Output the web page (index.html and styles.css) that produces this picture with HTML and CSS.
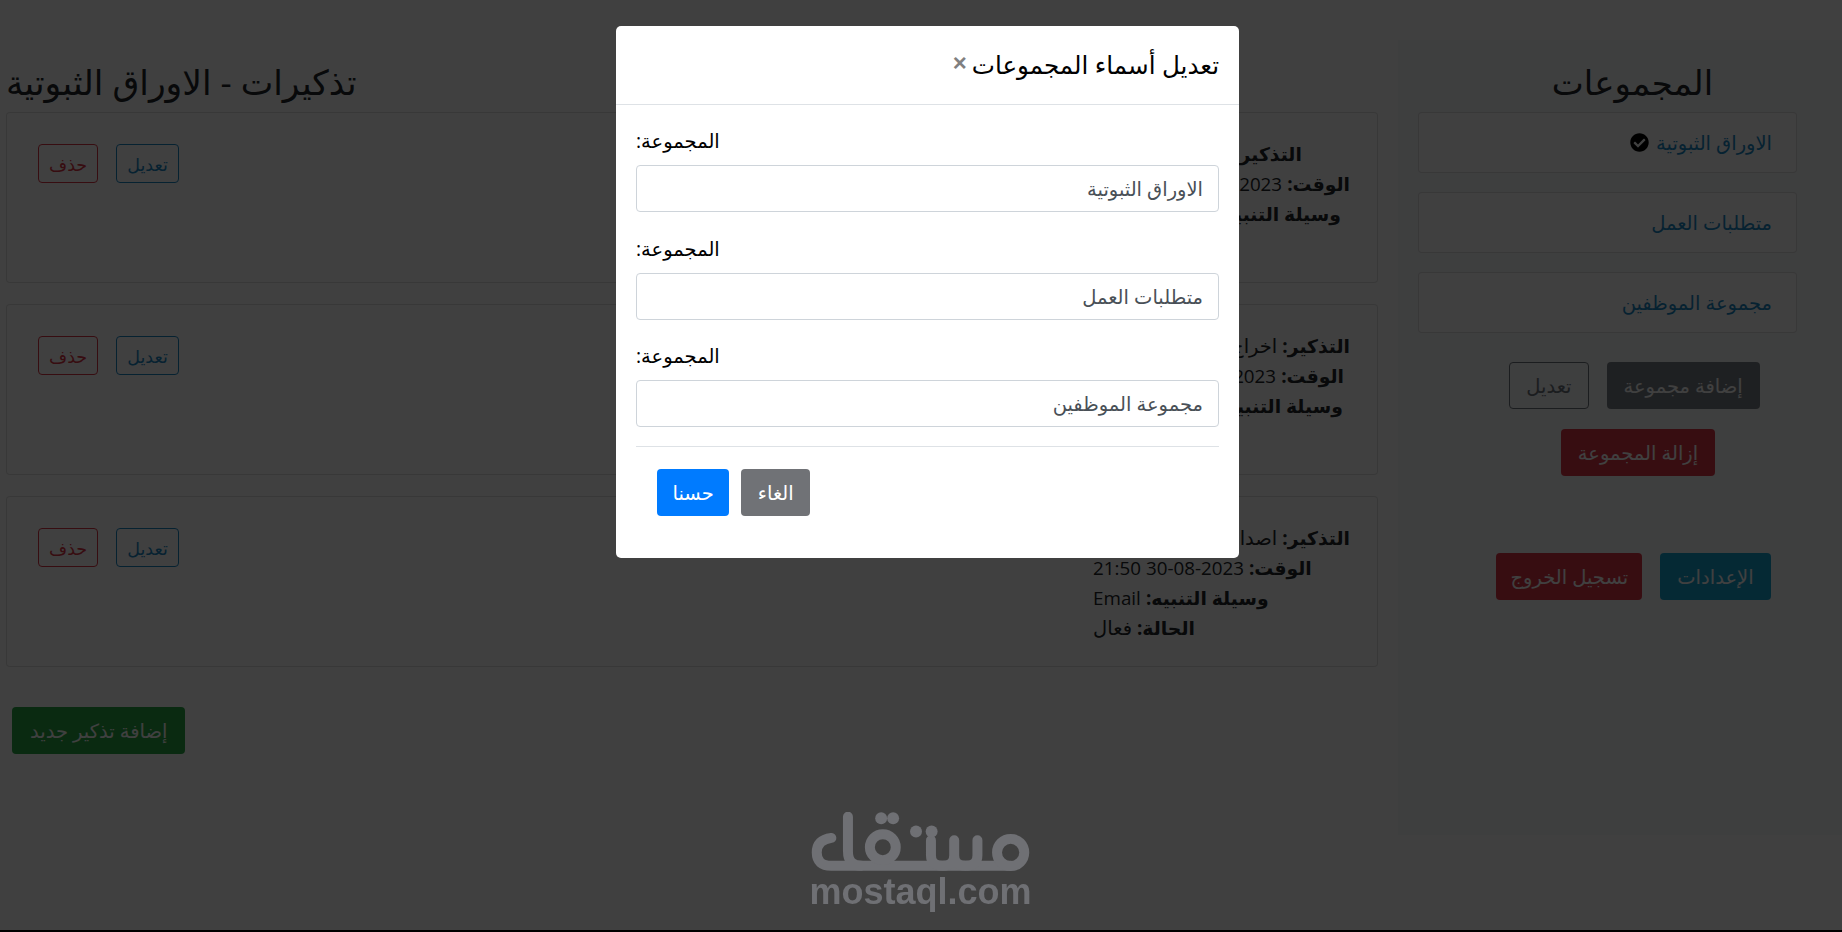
FILE: index.html
```html
<!DOCTYPE html>
<html lang="ar">
<head>
<meta charset="utf-8">
<title>تذكيرات</title>
<link rel="stylesheet" href="styles.css">
</head>
<body>
<div class="page">
  <main class="main">
    <h2 class="heading main-title">تذكيرات - الاوراق الثبوتية</h2>
    <section class="card">
      <div class="card-actions"><button class="btn btn-sm outline-danger">حذف</button><button class="btn btn-sm outline-primary">تعديل</button></div>
      <div class="details">
        <p><b>التذكير:</b> تجديد الجواز</p>
        <p><b>الوقت:</b> <span class="lat">2023-08-30 21:50</span></p>
        <p><b>وسيلة التنبيه:</b> <span class="lat">Telegram</span></p>
        <p><b>الحالة:</b> فعال</p>
      </div>
    </section>
    <section class="card">
      <div class="card-actions"><button class="btn btn-sm outline-danger">حذف</button><button class="btn btn-sm outline-primary">تعديل</button></div>
      <div class="details">
        <p><b>التذكير:</b> اخراج رخصة العمل</p>
        <p><b>الوقت:</b> <span class="lat">2023-08-30 21:50</span></p>
        <p><b>وسيلة التنبيه:</b> <span class="lat">WhatsApp</span></p>
        <p><b>الحالة:</b> فعال</p>
      </div>
    </section>
    <section class="card">
      <div class="card-actions"><button class="btn btn-sm outline-danger">حذف</button><button class="btn btn-sm outline-primary">تعديل</button></div>
      <div class="details">
        <p><b>التذكير:</b> اصدار بطاقة للموظفين</p>
        <p><b>الوقت:</b> <span class="lat">2023-08-30 21:50</span></p>
        <p><b>وسيلة التنبيه:</b> <span class="lat">Email</span></p>
        <p><b>الحالة:</b> فعال</p>
      </div>
    </section>
    <div class="add-row"><button class="btn success">إضافة تذكير جديد</button></div>
  </main>
  <aside class="sidebar">
    <h2 class="heading sidebar-title">المجموعات</h2>
    <ul class="groups">
      <li class="group"><a class="group-link">الاوراق الثبوتية</a>
        <svg class="check" viewBox="0 0 512 512"><path d="M504 256c0 137-111 248-248 248S8 393 8 256 119 8 256 8s248 111 248 248zM227 387l184-184c6-6 6-16 0-22l-23-23c-6-6-16-6-22 0L216 308l-70-70c-6-6-16-6-22 0l-23 23c-6 6-6 16 0 22l104 104c6 6 16 6 22 0z"/></svg>
      </li>
      <li class="group"><a class="group-link">متطلبات العمل</a></li>
      <li class="group"><a class="group-link">مجموعة الموظفين</a></li>
    </ul>
    <div class="side-row first"><button class="btn outline-dark">تعديل</button><button class="btn dark">إضافة مجموعة</button></div>
    <div class="side-row middle"><button class="btn danger">إزالة المجموعة</button></div>
    <div class="side-row bottom"><button class="btn danger logout">تسجيل الخروج</button><button class="btn info">الإعدادات</button></div>
  </aside>
</div>

<div class="backdrop"></div>

<div class="watermark">
  <svg class="mark" viewBox="0 0 840 250" fill="none" stroke="currentColor" stroke-width="30" stroke-linecap="round" stroke-linejoin="round">
    <path d="M200 14V118Q200 162 240 162"/>
    <path d="M150 78Q106 84 106 122Q106 162 150 162H690"/>
    <circle cx="305" cy="106" r="39"/>
    <circle cx="690" cy="122" r="41"/>
    <path d="M450 85V130Q450 162 485 162Q520 162 520 130V85M520 130Q520 162 555 162Q590 162 590 130V85"/>
    <g fill="currentColor" stroke="none">
      <circle cx="300" cy="19" r="18"/><circle cx="336" cy="19" r="18"/>
      <circle cx="405" cy="59" r="18"/><circle cx="452" cy="59" r="18"/>
    </g>
  </svg>
  <span class="mark-text">mostaql.com</span>
</div>

<div class="modal">
  <header class="modal-header">
    <h5 class="modal-title">تعديل أسماء المجموعات</h5>
    <span class="close">×</span>
  </header>
  <div class="modal-body">
    <div class="field"><label class="label">المجموعة:</label><input class="input" value="الاوراق الثبوتية"></div>
    <div class="field"><label class="label">المجموعة:</label><input class="input" value="متطلبات العمل"></div>
    <div class="field"><label class="label">المجموعة:</label><input class="input" value="مجموعة الموظفين"></div>
    <div class="modal-footer">
      <button class="btn primary">حسنا</button>
      <button class="btn secondary">الغاء</button>
    </div>
  </div>
</div>
<div class="base-line"></div>
</body>
</html>
```
FILE: styles.css
```css
* { box-sizing: border-box; }
html, body { margin: 0; height: 100%; overflow: hidden; }
body {
  font-family: "Open Sans", "DejaVu Sans", sans-serif;
  font-size: 19.5px;
  line-height: 24px;
  color: #212529;
  background: #fff;
}
.page { display: flex; height: 930px; }
.main { flex: 1; min-width: 0; padding: 58px 20px 0 6px; }
.heading { margin: 0; font-size: 34px; line-height: 48px; font-weight: 400; color: #212529; }
.main-title { height: 54px; font-size: 34.6px; text-align: left; }
.card {
  display: flex; justify-content: space-between; height: 171px; margin-bottom: 21px;
  padding: 31px 27px 0 31px; border: 1px solid rgba(0,0,0,.125); border-radius: 4px; background: #fff;
}
.card-actions { display: flex; gap: 18px; }
.details { direction: rtl; text-align: left; line-height: 30px; margin-top: -5px; }
.details p { margin: 0; white-space: nowrap; }
.details b { font-weight: 700; font-size: 18.8px; }
.lat { font-size: 18.8px; }
.btn {
  height: 47px; padding: 0 16px; border: 1px solid transparent; border-radius: 4px;
  font: inherit; white-space: nowrap; background: none; color: #fff;
}
.btn-sm { height: 39px; padding: 0 10px; font-size: 17.5px; }
.outline-danger { color: #dc3545; border-color: #dc3545; }
.outline-primary { color: #1b87c4; border-color: #1b87c4; }
.outline-dark { color: #6c757d; border-color: #6c757d; }
.success { background: #28a745; padding: 0 17px; }
.dark { background: #7a7f87; }
.danger { background: #dc3545; }
.logout { padding: 0 13px; }
.info { background: #17a2d0; }
.primary { background: #007bff; padding: 0 14.5px; }
.secondary { background: #707276; padding: 0 15.5px; }
.add-row { margin: 40px 0 0 6px; }
.sidebar { width: 444px; height: 795px; margin-top: 40px; padding: 18px 45px 0 20px; background: #f8f9fa; }
.sidebar-title { text-align: center; padding-left: 50px; }
.groups { list-style: none; margin: 6px 0 0; padding: 0; }
.group {
  direction: rtl; display: flex; align-items: center; gap: 7px; height: 61px; margin-bottom: 19px;
  padding: 0 24px; background: #fff; border: 1px solid rgba(0,0,0,.125); border-radius: 4px;
}
.group-link { color: #1b87c4; }
.check { width: 19px; height: 19px; fill: #000; }
.side-row { display: flex; justify-content: center; gap: 18px; margin-left: 54px; margin-bottom: 20px; }
.side-row.first { margin-top: 29px; }
.side-row.middle { margin-left: 61px; }
.side-row.bottom { margin-top: 77px; margin-left: 52px; }
.backdrop { position: fixed; inset: 0; background: rgba(0,0,0,.75); }
.base-line { position: fixed; left: 0; right: 0; bottom: 0; height: 2px; background: #000; }
.watermark {
  position: fixed; left: 810px; top: 812px; width: 221px; color: #6f7074;
  display: flex; flex-direction: column; align-items: center;
}
.mark { width: 280px; height: 83px; margin: 0 -30px; display: block; }
.mark-text { font: 700 36px/38px "Liberation Sans", sans-serif; margin-top: -22px; }
.modal {
  position: fixed; left: 616px; top: 26px; width: 623px; height: 532px;
  background: #fff; border-radius: 5px; color: #000;
}
.modal-header { direction: rtl; display: flex; align-items: center; gap: 5px; height: 79px; padding: 0 20px; border-bottom: 1px solid #dee2e6; }
.modal-title { margin: 0; font-size: 24.6px; font-weight: 400; line-height: 36px; }
.close { font: 700 24px/24px "Liberation Sans", sans-serif; color: #808080; margin-top: -5px; }
.modal-body { padding: 24px 20px 0; }
.field { height: 107.5px; display: flex; flex-direction: column; align-items: flex-start; }
.label { direction: rtl; margin-bottom: 12px; line-height: 24px; }
.input {
  width: 100%; height: 47px; padding: 0 15px; border: 1px solid #ced4da; border-radius: 4px;
  font: inherit; color: #495057; text-align: right; direction: rtl; background: #fff;
}
.modal-footer { display: flex; gap: 12px; margin-top: -5.5px; padding: 22px 21px 0; border-top: 1px solid #dee2e6; }
```
